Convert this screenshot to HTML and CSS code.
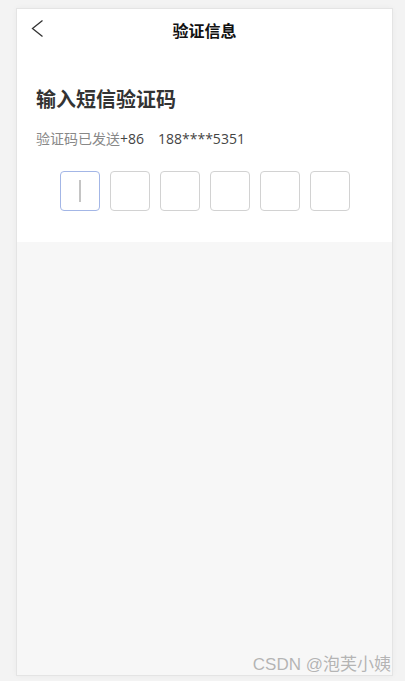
FILE: index.html
```html
<!DOCTYPE html>
<html lang="zh-CN">
<head>
  <meta charset="UTF-8">
  <meta name="viewport" content="width=device-width, initial-scale=1.0">
  <title>验证信息</title>
  <link rel="stylesheet" href="styles.css">
</head>
<body>
  <div class="phone">
    <div class="top">
      <div class="nav">
        <svg class="back" width="14" height="20" viewBox="0 0 14 20">
          <polyline points="11.5,1.5 1.5,9.5 11.5,17.5" fill="none" stroke="#333" stroke-width="1.3"/>
        </svg>
        <span class="nav-title">验证信息</span>
      </div>
      <div class="content">
        <h1 class="title">输入短信验证码</h1>
        <p class="tip">验证码已发送<span class="phone-no">+86<span class="sep"></span>188****5351</span></p>
        <div class="codes">
          <div class="code active"><span class="caret"></span></div>
          <div class="code"></div>
          <div class="code"></div>
          <div class="code"></div>
          <div class="code"></div>
          <div class="code"></div>
        </div>
      </div>
    </div>
  </div>
  <div class="mark">CSDN @泡芙小姨</div>
</body>
</html>
```

FILE: styles.css
```css
body {
  margin: 0;
  height: 681px;
  background: #f3f3f3;
  font-family: "Open Sans", "Noto Sans CJK SC", sans-serif;
  color: #333;
  overflow: hidden;
  position: relative;
}
.phone {
  margin: 8px 0 0 16px;
  width: 375px;
  height: 666px;
  border: 1px solid #e4e4e4;
  background: #f7f7f7;
  box-shadow: 0 0 6px rgba(0, 0, 0, 0.04);
}
.top {
  background: #fff;
  padding-bottom: 31px;
}
.nav {
  height: 42px;
  position: relative;
  display: flex;
  align-items: center;
  justify-content: center;
}
.back {
  position: absolute;
  left: 14px;
  top: 10px;
}
.nav-title {
  font-size: 16px;
  font-weight: bold;
  color: #111;
}
.content {
  padding: 0 19px;
}
.title {
  margin: 35px 0 0;
  font-size: 20px;
  line-height: 28px;
  font-weight: bold;
  color: #333;
}
.tip {
  margin: 15px 0 0;
  font-size: 14px;
  line-height: 20px;
  color: #888;
}
.phone-no {
  color: #444;
}
.sep {
  display: inline-block;
  width: 14px;
}
.codes {
  margin-top: 22px;
  display: flex;
  justify-content: center;
  gap: 10px;
}
.code {
  width: 38px;
  height: 38px;
  border: 1px solid #d2d2d2;
  border-radius: 4px;
  display: flex;
  align-items: center;
  justify-content: center;
}
.code.active {
  border-color: #a3b6e6;
}
.caret {
  width: 2px;
  height: 22px;
  background: #c4c4c4;
}
.mark {
  position: absolute;
  right: 14px;
  bottom: 6px;
  font-family: "Liberation Sans", "Noto Sans CJK SC", sans-serif;
  font-size: 17px;
  color: #b4b4b4;
  text-shadow: 0 0 1px #fff;
}
```
